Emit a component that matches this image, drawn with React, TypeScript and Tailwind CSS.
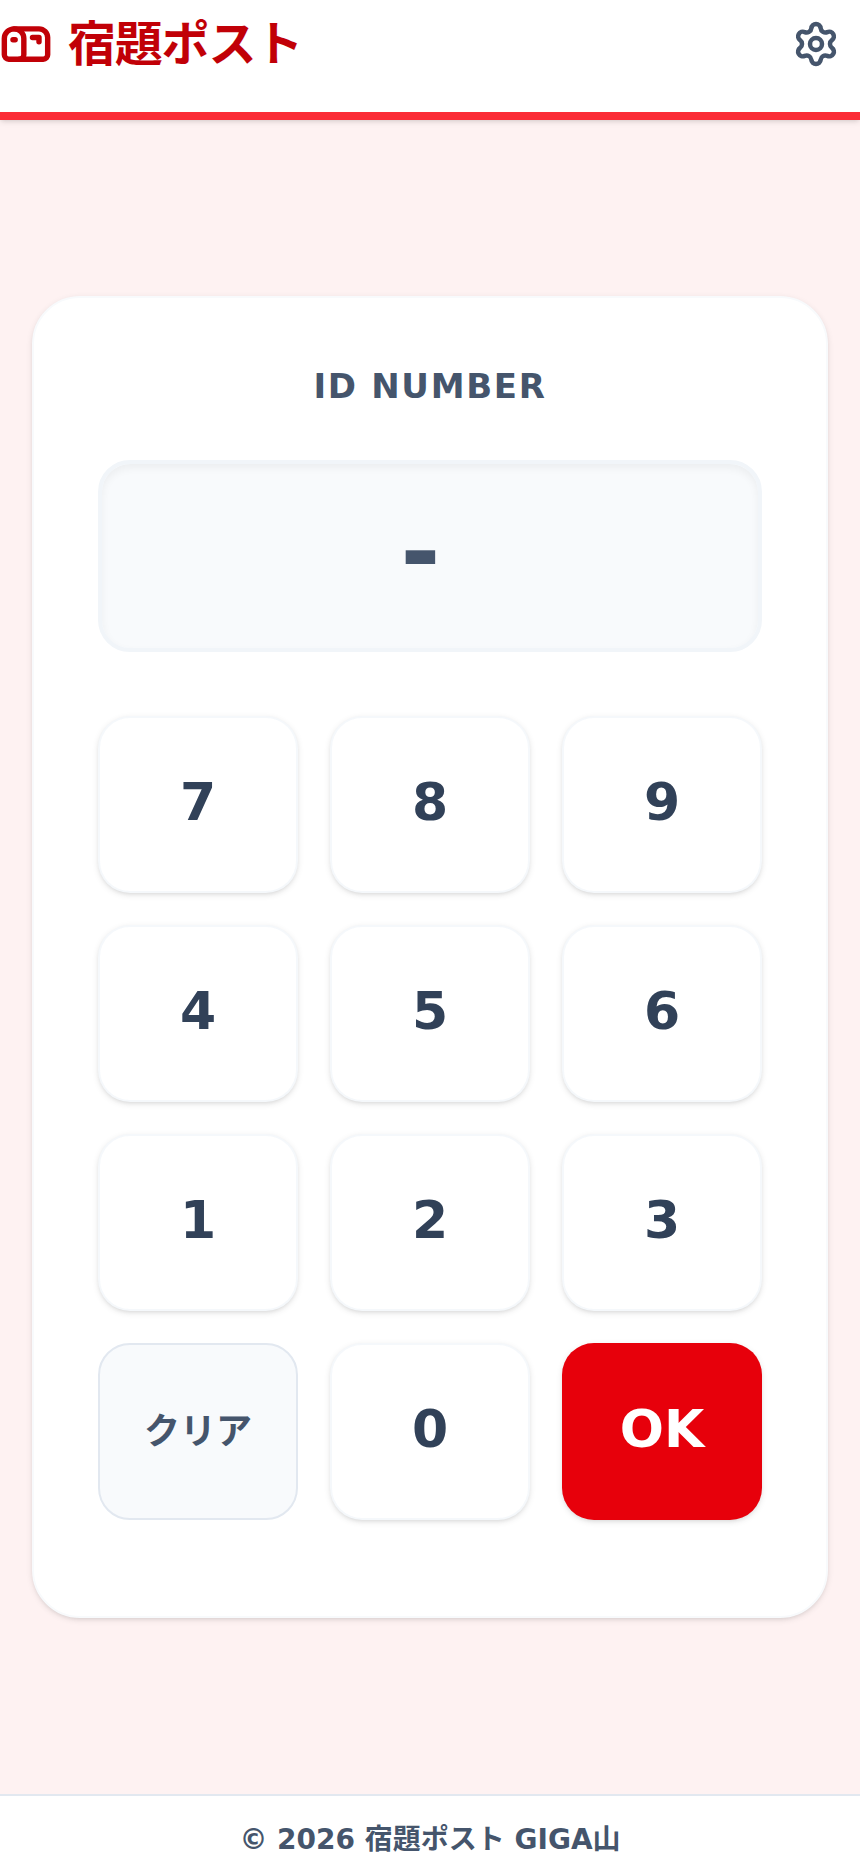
import React, { useState } from 'react';
import { Mailbox, Settings } from 'lucide-react';

const DIGITS = ['7', '8', '9', '4', '5', '6', '1', '2', '3'];

const keyBase = 'flex h-[177px] items-center justify-center rounded-[32px] font-bold';
const digitKey = `${keyBase} border-2 border-slate-100/70 bg-white pb-1.5 text-[52px] text-slate-700 shadow-[0_2px_6px_rgba(0,0,0,0.1),0_2px_4px_-2px_rgba(0,0,0,0.1)]`;

const App = () => {
  const [value, setValue] = useState('');

  const press = (digit: string) => setValue((prev) => (prev + digit).slice(0, 6));

  return (
    <div className="flex min-h-screen flex-col bg-red-50 font-['DejaVu_Sans','Noto_Sans_CJK_JP',sans-serif]">
      <header className="flex items-center justify-between border-b-8 border-red-500 bg-white pb-6 shadow-[0_2px_6px_rgba(0,0,0,0.1),0_2px_4px_-2px_rgba(0,0,0,0.1)]">
        <div className="flex items-center gap-4 text-red-700">
          <Mailbox size={52} strokeWidth={2.5} />
          <h1 className="text-5xl font-bold tracking-tight">宿題ポスト</h1>
        </div>
        <button type="button" aria-label="設定" className="p-5 text-slate-600">
          <Settings size={48} strokeWidth={2.25} />
        </button>
      </header>

      <main className="flex flex-1 items-center justify-center px-8">
        <section className="w-full rounded-[48px] border-2 border-slate-50 bg-white px-16 pt-16 pb-24 shadow-[0_2px_6px_rgba(0,0,0,0.1),0_2px_4px_-2px_rgba(0,0,0,0.1)]">
          <h2 className="mb-[50px] text-center text-[34px] leading-12 font-bold tracking-wider text-slate-600">
            ID NUMBER
          </h2>
          <div className="mb-16 flex h-48 items-center justify-center rounded-[32px] border-4 border-slate-100 bg-slate-50 pb-2 text-8xl font-bold tracking-[0.2em] text-slate-600 shadow-[inset_0_4px_8px_rgba(0,0,0,0.05)]">
            {value || '-'}
          </div>

          <div className="grid grid-cols-3 gap-8">
            {DIGITS.map((digit) => (
              <button key={digit} type="button" onClick={() => press(digit)} className={digitKey}>
                {digit}
              </button>
            ))}
            <button
              type="button"
              onClick={() => setValue('')}
              className={`${keyBase} border-2 border-slate-200 bg-slate-50 text-4xl text-slate-600`}
            >
              クリア
            </button>
            <button type="button" onClick={() => press('0')} className={digitKey}>
              0
            </button>
            <button
              type="button"
              className={`${keyBase} bg-red-600 pb-1.5 text-[52px] text-white shadow-[0_2px_6px_rgba(0,0,0,0.1),0_2px_4px_-2px_rgba(0,0,0,0.1)]`}
            >
              OK
            </button>
          </div>
        </section>
      </main>

      <footer className="border-t-2 border-slate-200 bg-white pt-6 text-center text-[28px] leading-10 font-bold text-slate-600">
        © 2026 宿題ポスト GIGA山
      </footer>
    </div>
  );
};

export default App;
